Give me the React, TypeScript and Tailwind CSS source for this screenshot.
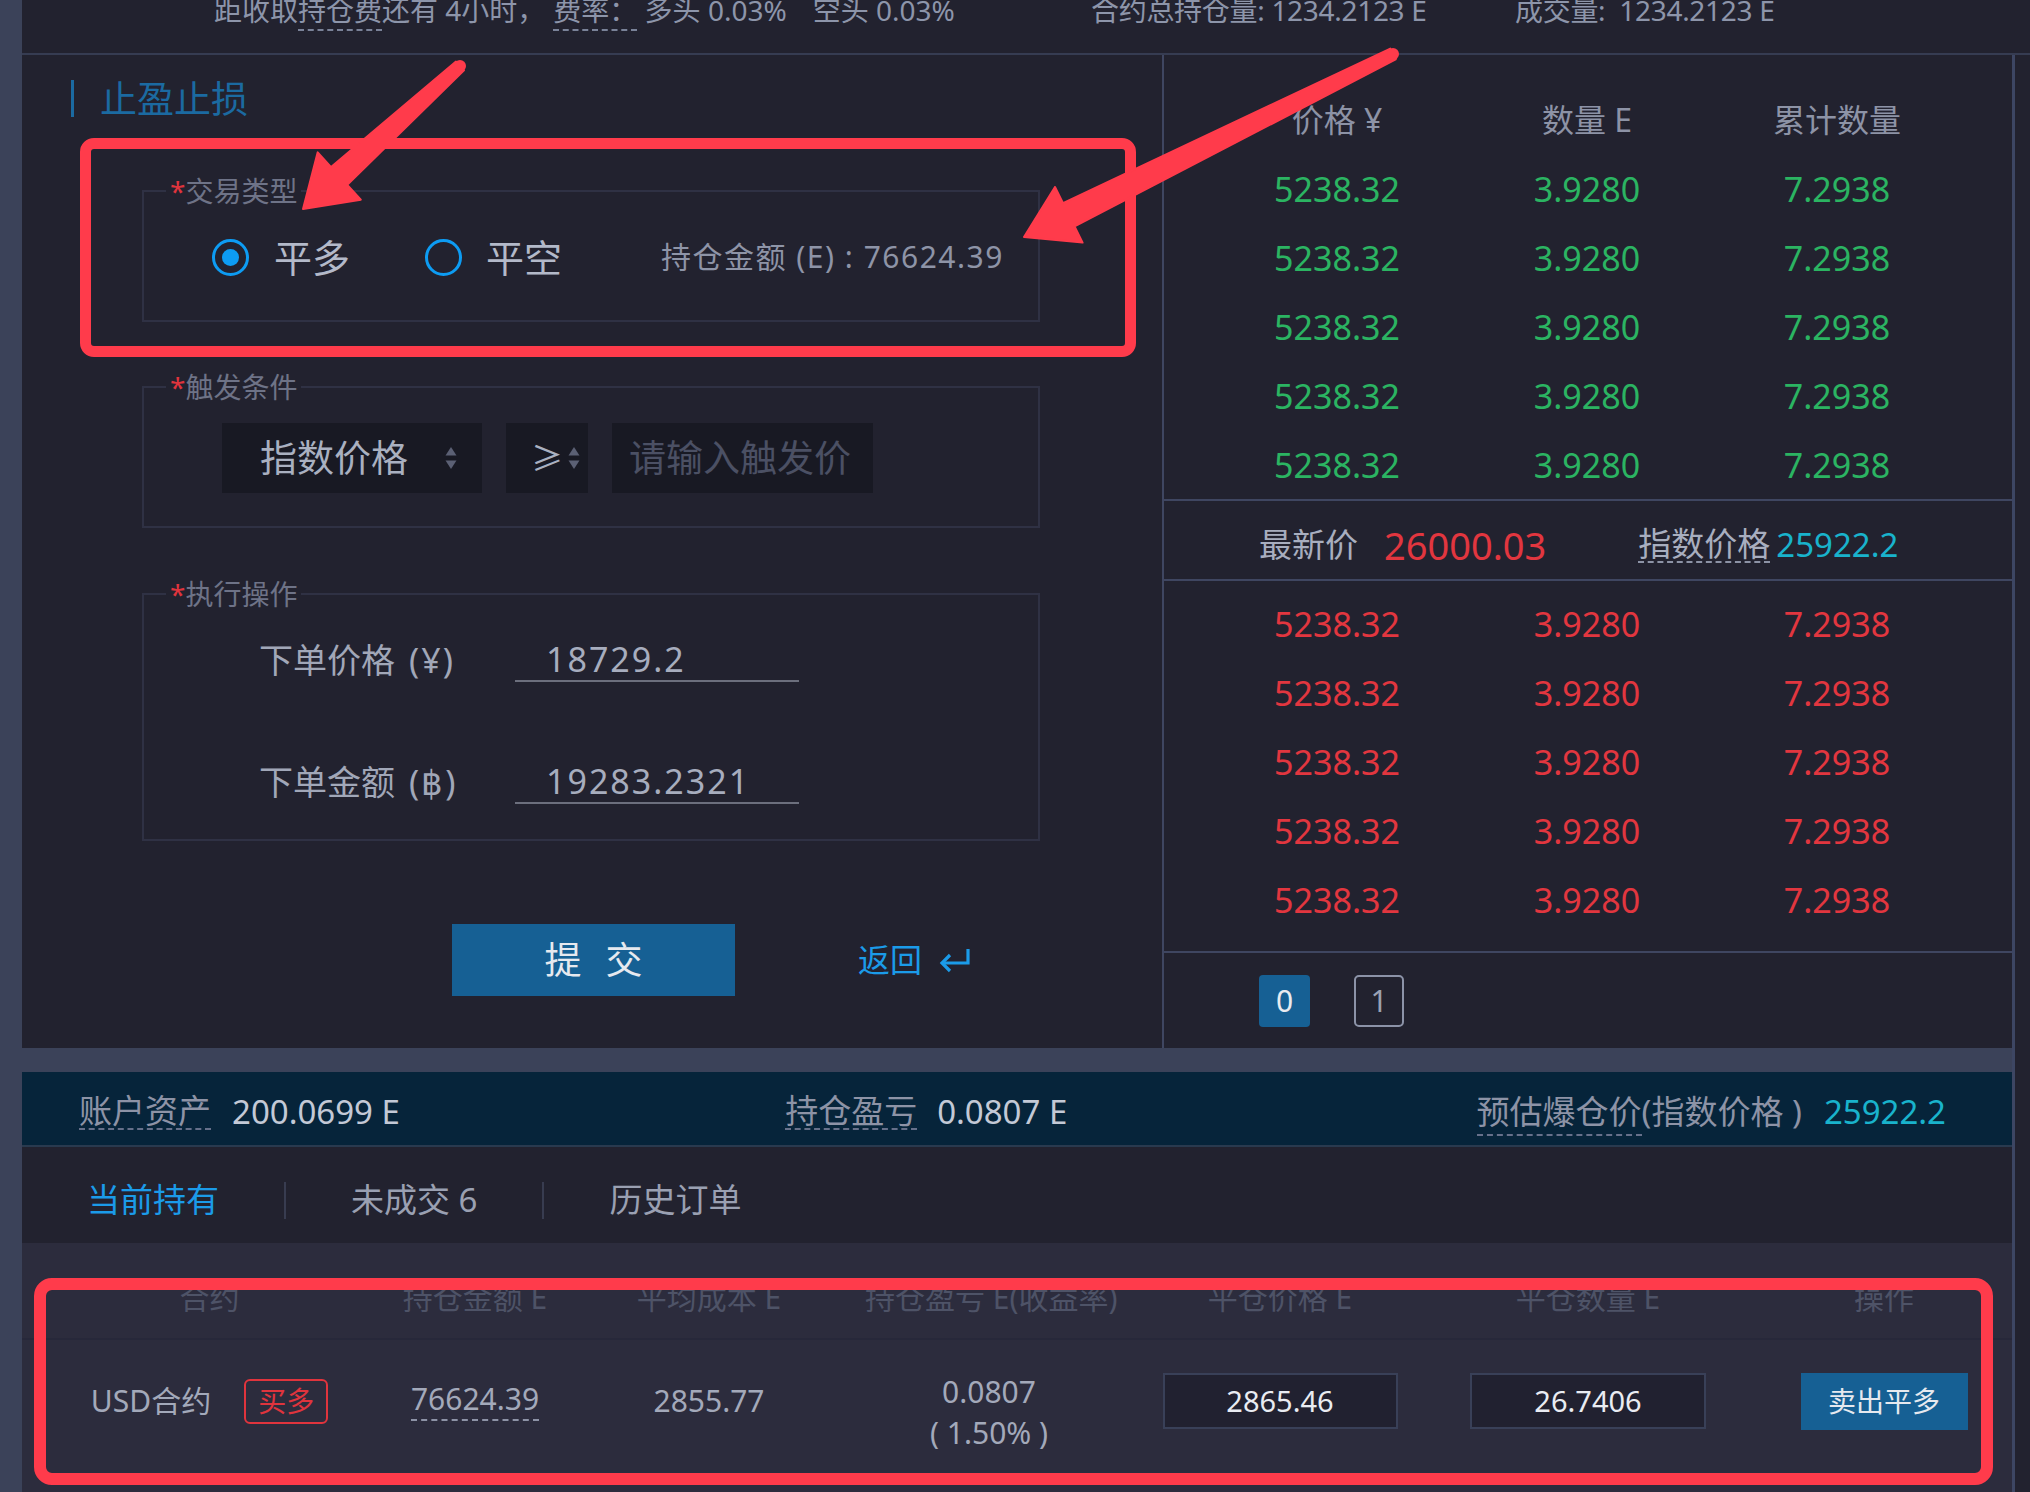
import React from "react";

type Pt = [number, number];

function Arrow({ s, t, headLen, headHalf, w0, w1 }: { s: Pt; t: Pt; headLen: number; headHalf: number; w0: number; w1: number }) {
  const dx = t[0] - s[0];
  const dy = t[1] - s[1];
  const L = Math.hypot(dx, dy);
  const ux = dx / L;
  const uy = dy / L;
  const nx = -uy;
  const ny = ux;
  const bx = t[0] - ux * headLen;
  const by = t[1] - uy * headLen;
  const p = (x: number, y: number) => `${x.toFixed(1)},${y.toFixed(1)}`;
  const pts = [
    p(s[0] + (nx * w0) / 2, s[1] + (ny * w0) / 2),
    p(bx + (nx * w1) / 2, by + (ny * w1) / 2),
    p(bx + nx * headHalf, by + ny * headHalf),
    p(t[0], t[1]),
    p(bx - nx * headHalf, by - ny * headHalf),
    p(bx - (nx * w1) / 2, by - (ny * w1) / 2),
    p(s[0] - (nx * w0) / 2, s[1] - (ny * w0) / 2),
  ].join(" ");
  return (
    <g>
      <polygon points={pts} strokeLinejoin="round" strokeWidth={2} stroke="#ff3b4b" />
      <circle cx={s[0]} cy={s[1]} r={w0 / 2} />
    </g>
  );
}

function SortIcon() {
  return (
    <svg width="14" height="24" viewBox="0 0 14 24" className="shrink-0">
      <polygon points="7,1 12.5,9.5 1.5,9.5" fill="#5b6074" />
      <polygon points="1.5,14.5 12.5,14.5 7,23" fill="#5b6074" />
    </svg>
  );
}

function ReturnIcon() {
  return (
    <svg width="34" height="26" viewBox="0 0 34 26" className="shrink-0">
      <path d="M30 2 V16 H5" fill="none" stroke="#1b9be9" strokeWidth="3.2" />
      <path d="M12 8 L4 16 L12 24" fill="none" stroke="#1b9be9" strokeWidth="3.2" />
    </svg>
  );
}

function Radio({ checked }: { checked: boolean }) {
  return (
    <div className="w-[37px] h-[37px] rounded-full border-[3px] border-[#0d9cf3] flex items-center justify-center shrink-0">
      {checked && <div className="w-[17px] h-[17px] rounded-full bg-[#0d9cf3]" />}
    </div>
  );
}

const rows = [0, 1, 2, 3, 4];

export default function App() {
  return (
    <div className="relative w-[2030px] h-[1492px] overflow-hidden bg-[#22222f] flex font-['Noto_Sans','Noto_Sans_CJK_SC',sans-serif]">
      <div className="w-[22px] shrink-0 bg-[#3b4259]" />
      <div className="flex-1 flex flex-col min-w-0">
        {/* top bar */}
        <div className="h-[55px] shrink-0 border-b-2 border-[#363c52] flex items-start text-[28px] leading-[28px] text-[#8d95aa] whitespace-pre">
          <div className="w-[1069px] pl-[192px] -mt-[4px]">
            距收取<span className="border-b-2 border-dashed border-[#7a8298]">持仓费</span>还有 4小时，<span className="ml-[8px] border-b-2 border-dashed border-[#7a8298]">费率：</span> 多头 0.03%<span className="ml-[26px]">空头 0.03%</span>
          </div>
          <div className="w-[424px] -mt-[4px] tracking-[-0.3px]">合约总持仓量: 1234.2123 E</div>
          <div className="-mt-[4px] tracking-[-0.3px]">成交量:  1234.2123 E</div>
        </div>

        <div className="flex-1 flex min-h-0">
          <div className="w-[1990px] shrink-0 flex flex-col">
            {/* main section */}
            <div className="h-[993px] shrink-0 flex">
              {/* left panel */}
              <div className="w-[1140px] shrink-0 flex flex-col">
                <div className="mt-[25px] flex items-center h-[37px]">
                  <div className="ml-[49px] w-[3px] h-[37px] bg-[#1b6aa1]" />
                  <div className="ml-[26px] text-[37px] leading-[37px] text-[#1b6aa1]">止盈止损</div>
                </div>

                <fieldset className="mt-[60px] ml-[120px] w-[898px] border-2 border-[#2f3144]">
                  <legend className="ml-[22px] px-[4px] text-[28px] leading-[28px] text-[#6e7387]">
                    <span className="text-[#e0343d]">*</span>交易类型
                  </legend>
                  <div className="h-[104px] mb-[11px] flex items-center pl-[68px]">
                    <Radio checked />
                    <span className="ml-[25px] text-[38px] leading-[40px] text-[#b3b9c9]">平多</span>
                    <div className="ml-[75px]">
                      <Radio checked={false} />
                    </div>
                    <span className="ml-[24px] text-[38px] leading-[40px] text-[#b3b9c9]">平空</span>
                    <span className="ml-[99px] text-[30px] leading-[32px] tracking-[1.5px] text-[#8e94a7] whitespace-pre">持仓金额 (E) : 76624.39</span>
                  </div>
                </fieldset>

                <fieldset className="mt-[51px] ml-[120px] w-[898px] border-2 border-[#2f3144]">
                  <legend className="ml-[22px] px-[4px] text-[28px] leading-[28px] text-[#6e7387]">
                    <span className="text-[#e0343d]">*</span>触发条件
                  </legend>
                  <div className="pt-[22px] pb-[33px] pl-[78px] flex gap-[24px]">
                    <div className="w-[260px] h-[70px] bg-[#181923] flex items-center pl-[38px] pr-[24px]">
                      <span className="text-[37px] leading-[40px] text-[#a9b0c0]">指数价格</span>
                      <span className="ml-auto"><SortIcon /></span>
                    </div>
                    <div className="w-[82px] h-[70px] bg-[#181923] flex items-center pl-[25px] pr-[7px]">
                      <span className="text-[32px] leading-[40px] text-[#a9b0c0]">≥</span>
                      <span className="ml-auto"><SortIcon /></span>
                    </div>
                    <div className="w-[261px] h-[70px] bg-[#181923] flex items-center pl-[17px]">
                      <span className="text-[37px] leading-[40px] text-[#4b5064]">请输入触发价</span>
                    </div>
                  </div>
                </fieldset>

                <fieldset className="mt-[52px] ml-[120px] w-[898px] border-2 border-[#2f3144]">
                  <legend className="ml-[22px] px-[4px] text-[28px] leading-[28px] text-[#6e7387]">
                    <span className="text-[#e0343d]">*</span>执行操作
                  </legend>
                  <div className="pt-[31px] pb-[35px] flex flex-col gap-[79px]">
                    <div className="flex items-end">
                      <div className="ml-[115px] w-[256px] text-[34px] leading-[43px] text-[#a1a7b8] whitespace-pre">下单价格<span className="ml-[14px] tracking-[2px]">(¥)</span></div>
                      <div className="w-[284px] h-[43px] border-b-2 border-[#6c6f7d] pl-[31px] text-[34px] leading-[41px] tracking-[2px] text-[#a7adbe]">18729.2</div>
                    </div>
                    <div className="flex items-end">
                      <div className="ml-[115px] w-[256px] text-[34px] leading-[43px] text-[#a1a7b8] whitespace-pre">下单金额<span className="ml-[14px] tracking-[2px]">(฿)</span></div>
                      <div className="w-[284px] h-[43px] border-b-2 border-[#6c6f7d] pl-[31px] text-[34px] leading-[41px] tracking-[2px] text-[#a7adbe]">19283.2321</div>
                    </div>
                  </div>
                </fieldset>

                <div className="mt-[83px] flex items-center">
                  <div className="ml-[430px] w-[283px] h-[72px] bg-[#166094] flex items-center justify-center gap-[24px] text-[37px] leading-[40px] text-[#e6e9ef]">
                    <span>提</span>
                    <span>交</span>
                  </div>
                  <div className="ml-[123px] flex items-center gap-[16px] text-[32px] leading-[36px] text-[#1b9be9]">
                    <span>返回</span>
                    <ReturnIcon />
                  </div>
                </div>
              </div>

              <div className="w-[2px] shrink-0 bg-[#3f4661]" />

              {/* right panel */}
              <div className="w-[848px] shrink-0 flex flex-col">
                <div className="pt-[31px] border-b-2 border-[#3f4661]">
                  <div className="h-[68px] px-[48px] pr-[50px] grid grid-cols-3 items-center text-center text-[32px] leading-[36px] text-[#8d93a6]">
                    <span>价格 ¥</span>
                    <span>数量 E</span>
                    <span>累计数量</span>
                  </div>
                  {rows.map((i) => (
                    <div key={i} className="h-[69px] px-[48px] pr-[50px] grid grid-cols-3 items-center text-center text-[34px] leading-[38px] text-[#2bb462]">
                      <span>5238.32</span>
                      <span>3.9280</span>
                      <span>7.2938</span>
                    </div>
                  ))}
                </div>

                <div className="h-[80px] border-b-2 border-[#3f4661] flex items-center pt-[10px] pl-[95px]">
                  <span className="text-[33px] leading-[36px] text-[#a8aebf]">最新价</span>
                  <span className="ml-[26px] text-[38px] leading-[40px] text-[#e2363f]">26000.03</span>
                  <span className="ml-[92px] text-[33px] leading-[34px] text-[#a8aebf] border-b-2 border-dashed border-[#8d93a6]">指数价格</span>
                  <span className="ml-[6px] text-[33px] leading-[36px] text-[#19b3cc]">25922.2</span>
                </div>

                <div className="pt-[8px] pb-[17px] border-b-2 border-[#3f4661]">
                  {rows.map((i) => (
                    <div key={i} className="h-[69px] px-[48px] pr-[50px] grid grid-cols-3 items-center text-center text-[34px] leading-[38px] text-[#e2363f]">
                      <span>5238.32</span>
                      <span>3.9280</span>
                      <span>7.2938</span>
                    </div>
                  ))}
                </div>

                <div className="flex-1 pt-[22px] pl-[95px] flex items-start gap-[44px]">
                  <div className="w-[51px] h-[52px] rounded-[4px] bg-[#166094] flex items-center justify-center text-[30px] leading-[34px] text-[#e8ebf0]">0</div>
                  <div className="w-[50px] h-[52px] rounded-[5px] border-2 border-[#8c93a8] flex items-center justify-center text-[30px] leading-[34px] text-[#9aa1b4]">1</div>
                </div>
              </div>
            </div>

            {/* gap */}
            <div className="h-[24px] shrink-0 bg-[#3b4259]" />

            {/* account bar */}
            <div className="h-[75px] shrink-0 bg-[#06243a] border-b-2 border-[#293a4f] flex items-center justify-between pl-[57px] pr-[66px] pt-[7px] text-[33px] leading-[34px]">
              <div className="flex items-center">
                <span className="text-[#8d93a6] border-b-2 border-dashed border-[#66708a]">账户资产</span>
                <span className="ml-[21px] text-[#c3c9d6]">200.0699 E</span>
              </div>
              <div className="flex items-center -ml-[24px]">
                <span className="text-[#8d93a6] border-b-2 border-dashed border-[#66708a]">持仓盈亏</span>
                <span className="ml-[20px] text-[#c3c9d6]">0.0807 E</span>
              </div>
              <div className="flex items-center">
                <span className="text-[#8d93a6]">
                  <span className="border-b-2 border-dashed border-[#66708a]">预估爆仓价</span>(指数价格 )
                </span>
                <span className="ml-[22px] text-[#19b3cc]">25922.2</span>
              </div>
            </div>

            {/* tabs */}
            <div className="h-[96px] shrink-0 flex items-center pt-[10px] pl-[65px] text-[33px] leading-[36px]">
              <span className="text-[#1b9be9]">当前持有</span>
              <div className="mx-[65px] w-[2px] h-[37px] bg-[#383c50]" />
              <span className="text-[#9aa0b2]">未成交 6</span>
              <div className="mx-[65px] w-[2px] h-[37px] bg-[#383c50]" />
              <span className="text-[#9aa0b2]">历史订单</span>
            </div>

            {/* table */}
            <div className="flex-1 bg-[#2c2c3d] flex flex-col">
              <div className="h-[97px] shrink-0 border-b-2 border-[#27283a] grid grid-cols-[375px_156px_312px_248px_334px_282px_283px] items-center pt-[15px] text-center text-[30px] leading-[34px] text-[#4e5367] whitespace-nowrap">
                <span>合约</span>
                <span>持仓金额 E</span>
                <span>平均成本 E</span>
                <span>持仓盈亏 E(收益率)</span>
                <span>平仓价格 E</span>
                <span>平仓数量 E</span>
                <span className="pl-[27px]">操作</span>
              </div>
              <div className="h-[122px] shrink-0 grid grid-cols-[375px_156px_312px_248px_334px_282px_283px] items-center text-center text-[30px] leading-[34px] text-[#a3a9ba] whitespace-nowrap">
                <div className="flex items-center justify-center">
                  <span>USD合约</span>
                  <span className="ml-[33px] w-[84px] h-[45px] border-2 border-[#e0343d] rounded-[6px] flex items-center justify-center text-[28px] text-[#e0343d]">买多</span>
                </div>
                <div className="flex justify-center">
                  <span className="pb-[3px] border-b-2 border-dashed border-[#8d93a6]">76624.39</span>
                </div>
                <div>2855.77</div>
                <div className="pt-[22px] flex flex-col items-center leading-[41px] whitespace-pre">
                  <span>0.0807</span>
                  <span>( 1.50% )</span>
                </div>
                <div className="flex justify-center">
                  <div className="w-[235px] h-[56px] bg-[#212130] border-2 border-[#394058] flex items-center justify-center text-[29px] text-[#e9ecf2]">2865.46</div>
                </div>
                <div className="flex justify-center">
                  <div className="w-[236px] h-[56px] bg-[#212130] border-2 border-[#394058] flex items-center justify-center text-[29px] text-[#e9ecf2]">26.7406</div>
                </div>
                <div className="flex justify-center pl-[27px]">
                  <div className="w-[167px] h-[57px] bg-[#166094] flex items-center justify-center text-[28px] text-[#e6e9ef]">卖出平多</div>
                </div>
              </div>
            </div>
          </div>
          <div className="w-[3px] shrink-0 bg-[#3d4663]" />
          <div className="flex-1" />
        </div>
      </div>

      {/* annotations */}
      <div className="absolute left-[80px] top-[138px] w-[1056px] h-[219px] border-[11px] border-[#ff3b4b] rounded-[14px] pointer-events-none" />
      <div className="absolute left-[34px] top-[1278px] w-[1959px] h-[207px] border-[12px] border-[#ff3b4b] rounded-[18px] pointer-events-none" />
      <svg className="absolute left-0 top-0 pointer-events-none" width="2030" height="1492" fill="#ff3b4b">
        <Arrow s={[460, 66]} t={[303, 209]} headLen={49} headHalf={32} w0={12} w1={24} />
        <Arrow s={[1393, 54]} t={[1024, 237]} headLen={50} headHalf={31} w0={12} w1={26} />
      </svg>
    </div>
  );
}
